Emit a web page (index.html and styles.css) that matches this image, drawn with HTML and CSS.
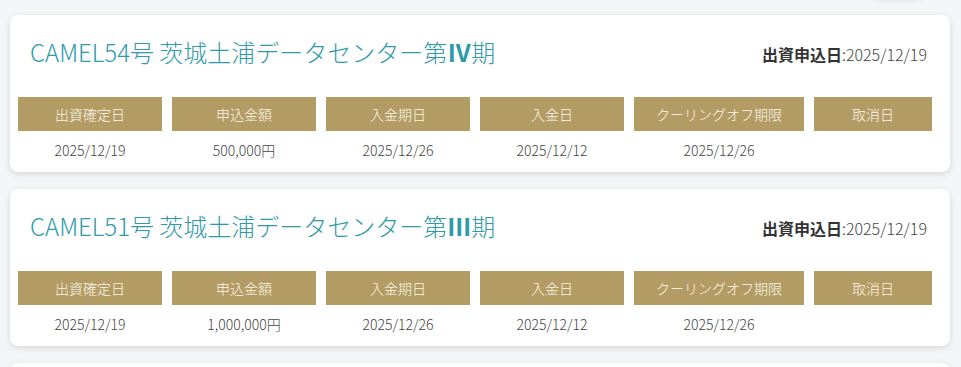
FILE: index.html
```html
<!DOCTYPE html>
<html lang="ja">
<head>
<meta charset="utf-8">
<link rel="stylesheet" href="styles.css">
</head>
<body>
<div class="page">
  <div class="ghost"></div>
  <div class="card">
    <div class="head">
      <h2 class="title">CAMEL54号 茨城土浦データセンター第<span class="roman">Ⅳ</span>期</h2>
      <div class="applied"><b>出資申込日</b>:2025/12/19</div>
    </div>
    <div class="table">
      <div class="th">出資確定日</div>
      <div class="th">申込金額</div>
      <div class="th">入金期日</div>
      <div class="th">入金日</div>
      <div class="th">クーリングオフ期限</div>
      <div class="th">取消日</div>
      <div class="td">2025/12/19</div>
      <div class="td">500,000円</div>
      <div class="td">2025/12/26</div>
      <div class="td">2025/12/12</div>
      <div class="td">2025/12/26</div>
      <div class="td"></div>
    </div>
  </div>
  <div class="card">
    <div class="head">
      <h2 class="title">CAMEL51号 茨城土浦データセンター第<span class="roman">Ⅲ</span>期</h2>
      <div class="applied"><b>出資申込日</b>:2025/12/19</div>
    </div>
    <div class="table">
      <div class="th">出資確定日</div>
      <div class="th">申込金額</div>
      <div class="th">入金期日</div>
      <div class="th">入金日</div>
      <div class="th">クーリングオフ期限</div>
      <div class="th">取消日</div>
      <div class="td">2025/12/19</div>
      <div class="td">1,000,000円</div>
      <div class="td">2025/12/26</div>
      <div class="td">2025/12/12</div>
      <div class="td">2025/12/26</div>
      <div class="td"></div>
    </div>
  </div>
  <div class="card"></div>
</div>
</body>
</html>
```

FILE: styles.css
```css
html, body {
  margin: 0;
  padding: 0;
  background: #f3f5f7;
  font-family: "Noto Sans CJK JP", sans-serif;
  font-weight: 300;
  overflow: hidden;
}
.page {
  padding: 15px 11px 0 10px;
  display: flex;
  flex-direction: column;
  gap: 17px;
}
.ghost {
  align-self: flex-end;
  width: 64px;
  height: 30px;
  margin: -46px 20px -1px 0;
  border-radius: 15px;
  background: #f3f5f7;
  box-shadow: 0 2px 5px rgba(0,0,0,0.07);
}
.card {
  background: #fff;
  border-radius: 8px;
  box-shadow: 0 2px 6px rgba(0,0,0,0.12);
  padding: 19px 18px 3px 8px;
  min-height: 100px;
}
.head {
  display: flex;
  align-items: center;
  justify-content: space-between;
  padding: 0 5px 0 12px;
  height: 34px;
}
.title {
  margin: 0;
  font-weight: 300;
  font-size: 24px;
  color: #2e9aaa;
}
.roman {
  font-weight: 700;
}
.applied {
  font-size: 16px;
  color: #444;
  margin-top: 5px;
}
.applied b {
  font-weight: 700;
  color: #333;
}
.table {
  margin-top: 29px;
  display: grid;
  grid-template-columns: 144px 144px 144px 144px 170px 118px;
  column-gap: 10px;
}
.th {
  background: #b39c64;
  color: #fbf6ea;
  font-size: 14px;
  height: 34px;
  display: flex;
  align-items: center;
  justify-content: center;
}
.td {
  font-size: 14px;
  color: #444;
  text-align: center;
  height: 38px;
  line-height: 38px;
}
```
